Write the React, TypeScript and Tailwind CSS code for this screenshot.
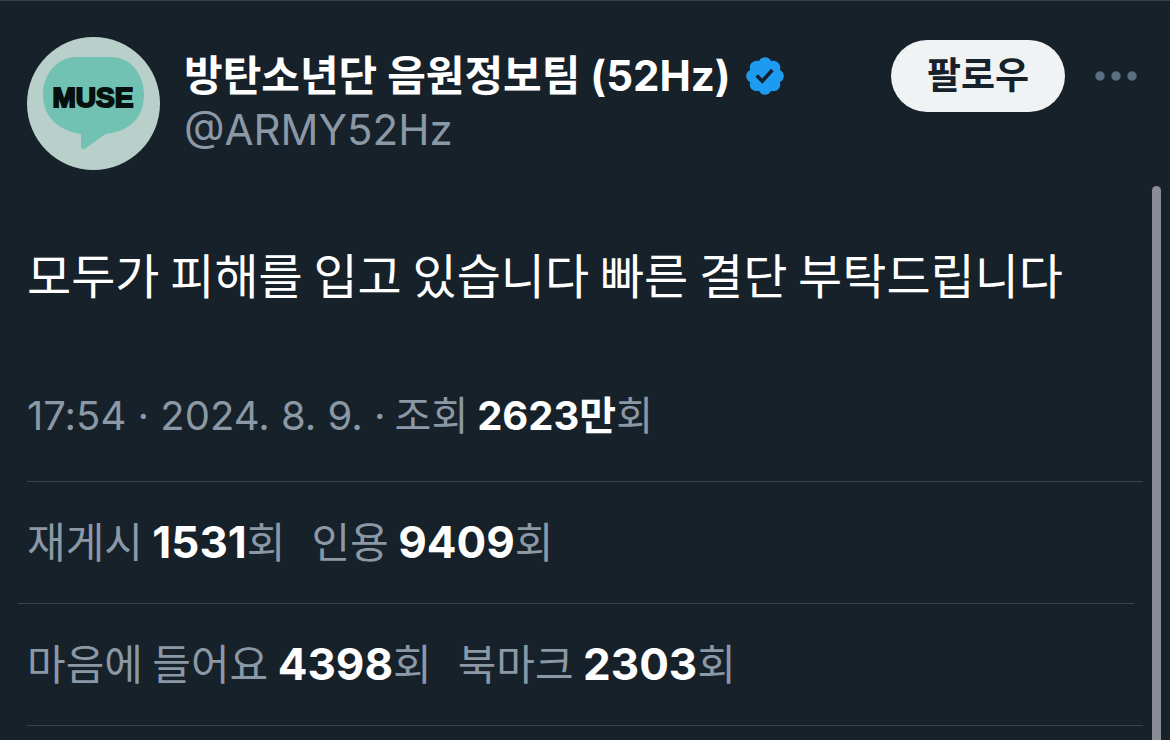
type Stat = {
  label: string;
  value: string;
};

const reposts: Stat[] = [
  { label: '재게시', value: '1531' },
  { label: '인용', value: '9409' },
];

const reactions: Stat[] = [
  { label: '마음에 들어요', value: '4398' },
  { label: '북마크', value: '2303' },
];

const Avatar = () => (
  <svg viewBox="0 0 133 133" className="w-[133px] h-[133px] shrink-0" role="img" aria-label="MUSE">
    <circle cx="66.5" cy="66.5" r="66.5" fill="#b9cfc9" />
    <path
      d="M50 20H84C104 20 117 37 117 58C117 79 104 93 84 96Q80 96 77 98L59 111Q54 114 54 109V97C30 93 16 79 16 58C16 37 30 20 50 20Z"
      fill="#72c2b3"
    />
    <text
      x="66"
      y="70"
      textAnchor="middle"
      fill="#06100f"
      stroke="#06100f"
      strokeWidth="2"
      className="font-['Liberation_Sans',sans-serif] text-[28px] font-bold"
    >
      MUSE
    </text>
  </svg>
);

const VerifiedBadge = () => (
  <svg viewBox="0 0 22 22" className="w-11 h-11 shrink-0" role="img" aria-label="인증된 계정">
    <path
      fill="#1d9bf0"
      d="M20.396 11c-.018-.646-.215-1.275-.57-1.816-.354-.54-.852-.972-1.438-1.246.223-.607.27-1.264.14-1.897-.131-.634-.437-1.218-.882-1.687-.47-.445-1.053-.75-1.687-.882-.633-.13-1.29-.083-1.897.14-.273-.587-.704-1.086-1.245-1.44S11.647 1.62 11 1.604c-.646.017-1.273.213-1.813.568s-.969.854-1.24 1.44c-.608-.223-1.267-.272-1.902-.14-.635.13-1.22.436-1.69.882-.445.47-.749 1.055-.878 1.688-.13.633-.08 1.29.144 1.896-.587.274-1.087.705-1.443 1.245-.356.54-.555 1.17-.574 1.817.02.647.218 1.276.574 1.817.356.54.856.972 1.443 1.245-.224.606-.274 1.263-.144 1.896.13.634.433 1.218.877 1.688.47.443 1.054.747 1.687.878.633.132 1.29.084 1.897-.136.274.586.705 1.084 1.246 1.439.54.354 1.17.551 1.816.569.647-.016 1.276-.213 1.817-.567s.972-.854 1.245-1.44c.604.239 1.266.296 1.903.164.636-.132 1.22-.447 1.68-.907.46-.46.776-1.044.908-1.681s.075-1.299-.165-1.903c.586-.274 1.084-.705 1.439-1.246.354-.54.551-1.17.569-1.816zM9.662 14.85l-3.429-3.428 1.293-1.302 2.072 2.072 4.4-4.794 1.347 1.246z"
    />
  </svg>
);

const StatRow = ({ stats }: { stats: Stat[] }) => (
  <div className="flex flex-wrap gap-x-[26px] pt-7 pb-[33px] text-[42px] leading-[60px] font-['Noto_Sans_CJK_KR',sans-serif]">
    {stats.map((stat) => (
      <a key={stat.label} href="#stats">
        {stat.label}{' '}
        <strong className="font-['Inter',sans-serif] text-[44px] leading-none font-bold text-white">{stat.value}</strong>회
      </a>
    ))}
  </div>
);

const App = () => {
  return (
    <div className="flex min-h-screen border-t border-[#38444d] bg-[#17212a] text-[#8b98a5] font-['Inter','Noto_Sans_CJK_KR',sans-serif]">
      <article className="flex-1 min-w-0 pl-[27px] pr-[9px] pt-9">
        {/* Author */}
        <header className="flex items-start">
          <Avatar />
          <div className="flex-1 min-w-0 ml-6 pt-3">
            <div className="flex items-center gap-3">
              <h1 className="text-[42px] leading-[54px] font-bold text-white whitespace-nowrap">
                방탄소년단 음원정보팀 (52Hz)
              </h1>
              <VerifiedBadge />
            </div>
            <p className="text-[42px] leading-[54px]">@ARMY52Hz</p>
          </div>
          <button
            type="button"
            className="mt-[3px] h-[72px] px-9 rounded-full bg-[#eff3f4] text-[#17212a] text-[37px] font-bold shrink-0"
          >
            팔로우
          </button>
          <button type="button" aria-label="더 보기" className="mt-[3px] ml-[30px] mr-1.5 h-[72px] shrink-0">
            <svg viewBox="0 0 42 10" className="w-[42px] h-[10px]" fill="#5b7083">
              <circle cx="5" cy="5" r="4.7" />
              <circle cx="21" cy="5" r="4.7" />
              <circle cx="37" cy="5" r="4.7" />
            </svg>
          </button>
        </header>

        {/* Post */}
        <p className="mt-[67px] text-5xl leading-[72px] text-white font-['Noto_Sans_CJK_KR',sans-serif]">
          모두가 피해를 입고 있습니다 빠른 결단 부탁드립니다
        </p>
        <p className="mt-[74px] text-[40px] leading-[60px]">
          <time dateTime="2024-08-09T17:54">17:54 · 2024. 8. 9.</time> ·
          <span className="font-['Noto_Sans_CJK_KR',sans-serif]"> 조회 </span>
          <strong className="font-bold text-white">2623만</strong>회
        </p>

        {/* Counters */}
        <div className="mt-[35px] border-t border-[#38444d]">
          <StatRow stats={reposts} />
        </div>
        <div className="relative -left-[9px] border-t border-[#38444d]" />
        <div className="border-b border-[#38444d]">
          <StatRow stats={reactions} />
        </div>
      </article>

      {/* Scroll thumb */}
      <div className="flex w-[18px] shrink-0 pt-[185px]">
        <div className="w-[9px] rounded-t-full bg-[#8a8e94]" />
      </div>
    </div>
  );
};

export default App;
